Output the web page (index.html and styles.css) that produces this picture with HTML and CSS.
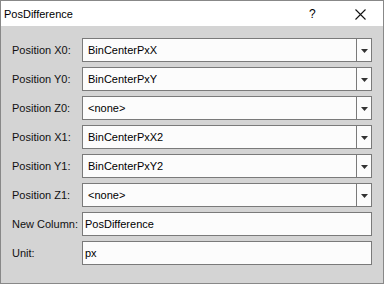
FILE: index.html
```html
<!DOCTYPE html>
<html lang="en">
<head>
    <meta charset="UTF-8">
    <title>PosDifference</title>
    <link rel="stylesheet" href="styles.css">
</head>
<body>
    <div class="window">
        <div class="titlebar">
            <span class="title">PosDifference</span>
            <span class="help">?</span>
            <span class="close">
                <svg width="11" height="11" viewBox="0 0 11 11">
                    <path d="M0.5 0.5 L10.5 10.5 M10.5 0.5 L0.5 10.5" stroke="#111" stroke-width="1.1" fill="none"/>
                </svg>
            </span>
        </div>

        <div class="form">
            <label>Position X0:</label>
            <div class="combo"><span class="value">BinCenterPxX</span><span class="arrow"><svg width="7" height="4" viewBox="0 0 7 4"><polygon points="0,0 7,0 3.5,4" fill="#333"/></svg></span></div>

            <label>Position Y0:</label>
            <div class="combo"><span class="value">BinCenterPxY</span><span class="arrow"><svg width="7" height="4" viewBox="0 0 7 4"><polygon points="0,0 7,0 3.5,4" fill="#333"/></svg></span></div>

            <label>Position Z0:</label>
            <div class="combo"><span class="value">&lt;none&gt;</span><span class="arrow"><svg width="7" height="4" viewBox="0 0 7 4"><polygon points="0,0 7,0 3.5,4" fill="#333"/></svg></span></div>

            <label>Position X1:</label>
            <div class="combo"><span class="value">BinCenterPxX2</span><span class="arrow"><svg width="7" height="4" viewBox="0 0 7 4"><polygon points="0,0 7,0 3.5,4" fill="#333"/></svg></span></div>

            <label>Position Y1:</label>
            <div class="combo"><span class="value">BinCenterPxY2</span><span class="arrow"><svg width="7" height="4" viewBox="0 0 7 4"><polygon points="0,0 7,0 3.5,4" fill="#333"/></svg></span></div>

            <label>Position Z1:</label>
            <div class="combo"><span class="value">&lt;none&gt;</span><span class="arrow"><svg width="7" height="4" viewBox="0 0 7 4"><polygon points="0,0 7,0 3.5,4" fill="#333"/></svg></span></div>

            <label>New Column:</label>
            <input type="text" class="edit" value="PosDifference">

            <label>Unit:</label>
            <input type="text" class="edit" value="px">
        </div>
    </div>
</body>
</html>
```

FILE: styles.css
```css
body {
    margin: 0;
    padding: 0;
    font-family: "Liberation Sans", Arial, sans-serif;
    font-size: 11px;
    color: #111;
}
.window {
    width: 384px;
    height: 284px;
    box-sizing: border-box;
    border: 1px solid #888;
    background-color: #d4d4d4;
}
.titlebar {
    display: flex;
    align-items: center;
    height: 25px;
    padding-left: 3px;
    background-color: #fff;
}
.title {
    font-size: 11px;
    color: #000;
}
.help {
    margin-left: auto;
    font-size: 12px;
    color: #000;
    width: 6px;
}
.close {
    display: flex;
    margin-left: 40px;
    margin-right: 17px;
    padding-top: 1px;
}
.form {
    display: grid;
    grid-template-columns: 70px 290px;
    grid-auto-rows: 24px;
    row-gap: 5px;
    padding: 12px 11px 0 11px;
}
.form label {
    display: flex;
    align-items: center;
    white-space: nowrap;
}
.combo {
    display: flex;
    box-sizing: border-box;
    height: 24px;
    border: 1px solid #7a7a7a;
    background-color: #fcfcfc;
}
.combo .value {
    flex: 1;
    display: flex;
    align-items: center;
    padding-left: 5px;
    color: #000;
}
.combo .arrow {
    width: 14px;
    display: flex;
    align-items: center;
    justify-content: center;
    border-left: 1px solid #7a7a7a;
    padding-top: 1px;
}
.edit {
    box-sizing: border-box;
    width: 290px;
    height: 24px;
    margin: 0;
    padding: 0 0 0 2px;
    border: 1px solid #7a7a7a;
    border-radius: 0;
    background-color: #fcfcfc;
    font-family: "Liberation Sans", Arial, sans-serif;
    font-size: 11px;
    color: #000;
    outline: none;
}
```
